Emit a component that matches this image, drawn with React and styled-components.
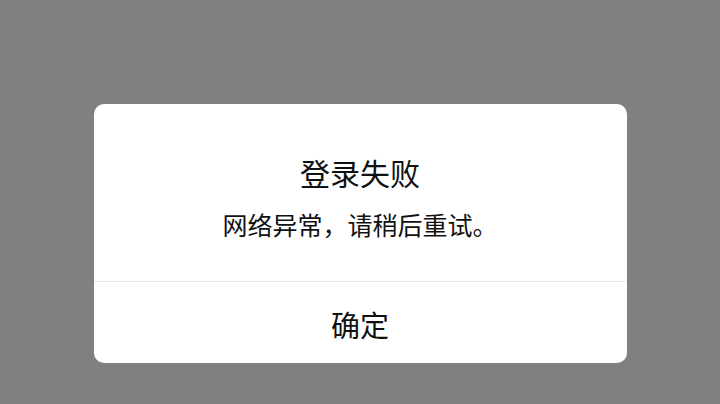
import React from 'react'
import styled, { createGlobalStyle } from 'styled-components'

const GlobalStyle = createGlobalStyle`
  html, body {
    margin: 0;
    padding: 0;
    width: 100%;
    height: 100%;
    background: #808080;
    font-family: "Noto Sans CJK SC", "Noto Sans", sans-serif;
  }
  #root {
    height: 100%;
  }
`

const Overlay = styled.div`
  width: 100vw;
  height: 100vh;
  background: #808080;
  display: flex;
  justify-content: center;
  align-items: flex-start;
  padding-top: 104px;
  box-sizing: border-box;
`

const Dialog = styled.div`
  width: 533px;
  height: 259px;
  background: #fff;
  border-radius: 10px;
  display: flex;
  flex-direction: column;
  overflow: hidden;
`

const Body = styled.div`
  height: 178px;
  display: flex;
  flex-direction: column;
  align-items: center;
  padding-top: 49px;
  box-sizing: border-box;
  border-bottom: 1px solid #e6e6e6;
`

const Title = styled.h2`
  margin: 0;
  font-size: 30px;
  font-weight: 400;
  line-height: 38px;
  color: #111;
`

const Message = styled.p`
  margin: 17px 0 0;
  font-size: 25px;
  line-height: 32px;
  color: #111;
  white-space: nowrap;
`

const ConfirmButton = styled.button`
  flex: 1;
  border: none;
  outline: none;
  background: transparent;
  font-family: inherit;
  font-size: 29px;
  color: #111;
  cursor: pointer;
  padding: 3px 0 0;
`

const App = () => {
  return (
    <>
      <GlobalStyle />
      <Overlay>
        <Dialog>
          <Body>
            <Title>登录失败</Title>
            <Message>网络异常，请稍后重试。</Message>
          </Body>
          <ConfirmButton>确定</ConfirmButton>
        </Dialog>
      </Overlay>
    </>
  )
}

export default App
